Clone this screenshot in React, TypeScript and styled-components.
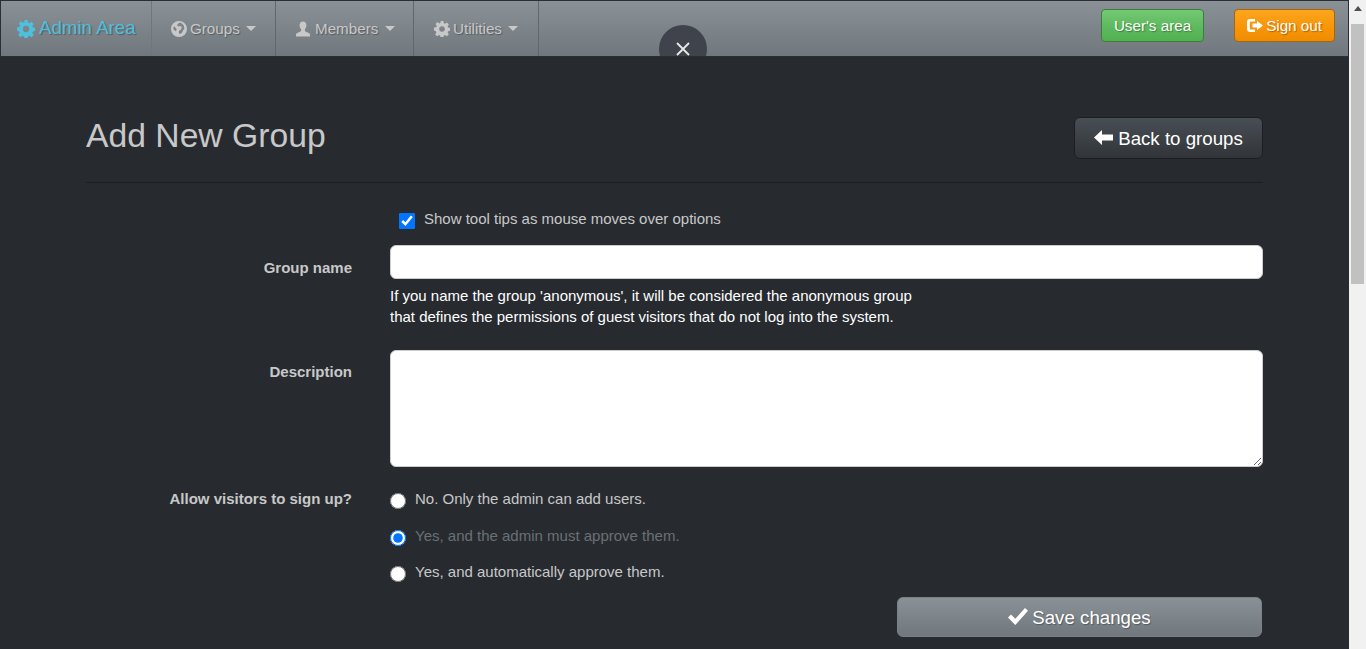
import React from 'react'
import styled, { createGlobalStyle } from 'styled-components'

const GlobalStyle = createGlobalStyle`
  html, body {
    margin: 0;
    height: 100%;
    overflow: hidden;
    background: #272b30;
  }
  * {
    box-sizing: border-box;
  }
  body {
    font-family: "Liberation Sans", Arial, sans-serif;
    font-size: 15px;
    line-height: 1.43;
    color: #c8c8c8;
  }
`

const Viewport = styled.div`
  display: flex;
  height: 100vh;
  overflow: hidden;
`

const Page = styled.div`
  flex: 1;
  min-width: 0;
  overflow: hidden;
`

const Navbar = styled.nav`
  display: flex;
  align-items: stretch;
  justify-content: space-between;
  height: 57px;
  background: linear-gradient(#8a9196, #7a8288 60%, #70787d);
  border: 1px solid #2b2e32;
  position: relative;
  overflow: hidden;
`

const NavLeft = styled.div`
  display: flex;
  align-items: stretch;
`

const NavRight = styled.div`
  display: flex;
  align-items: flex-start;
  gap: 30px;
  padding: 8px 13px 0 0;
`

const Brand = styled.a`
  display: flex;
  align-items: center;
  gap: 4px;
  width: 151px;
  padding-left: 16px;
  font-size: 18.7px;
  color: #4ebfdc;
  text-shadow: 1px 1px 1px rgba(0, 0, 0, 0.3);
  border-right: 1px solid #6f777c;
`

const NavItem = styled.a<{ $w: number; $pad?: number; $gap?: number }>`
  display: flex;
  align-items: center;
  gap: ${p => p.$gap ?? 3}px;
  width: ${p => p.$w}px;
  padding-left: ${p => p.$pad ?? 19}px;
  font-size: 15.2px;
  color: #c8c8c8;
  text-shadow: 1px 1px 1px rgba(0, 0, 0, 0.3);
  border-right: 1px solid #60686d;
`

const Caret = styled.span`
  width: 0;
  height: 0;
  margin-left: 3px;
  border-top: 5px solid #c8c8c8;
  border-left: 5px solid transparent;
  border-right: 5px solid transparent;
`

const NavButton = styled.a<{ $kind: 'success' | 'warning' }>`
  display: flex;
  align-items: center;
  justify-content: center;
  gap: 3px;
  height: 33px;
  width: ${p => (p.$kind === 'success' ? 103 : 101)}px;
  font-size: 15.2px;
  color: #fff;
  text-shadow: 1px 1px 1px rgba(0, 0, 0, 0.3);
  border-radius: 4px;
  border: 1px solid ${p => (p.$kind === 'success' ? '#3c7f3c' : '#a8650c')};
  background: ${p =>
    p.$kind === 'success'
      ? 'linear-gradient(#73c973, #5cb85c 60%, #52b052)'
      : 'linear-gradient(#fba61f, #f89406 60%, #ee8c02)'};
`

const CloseTab = styled.button`
  position: absolute;
  top: 24px;
  left: 658px;
  width: 48px;
  height: 48px;
  padding: 0;
  display: flex;
  align-items: center;
  justify-content: center;
  border: none;
  border-radius: 50%;
  background: #3f444c;
  color: #e8e8e8;
`

const Container = styled.main`
  padding: 0 86px;
`

const Header = styled.header`
  display: flex;
  align-items: flex-start;
  justify-content: space-between;
  height: 126px;
  padding-top: 60px;
  border-bottom: 1px solid #1c1e22;
`

const Title = styled.h1`
  margin: 0;
  font-size: 33.7px;
  font-weight: 400;
  line-height: 36px;
  color: #c8c8c8;
`

const BackButton = styled.a`
  display: flex;
  align-items: center;
  justify-content: center;
  gap: 5px;
  width: 189px;
  height: 42px;
  padding-top: 2px;
  font-size: 18.7px;
  color: #fff;
  border: 1px solid #1c1e22;
  border-radius: 6px;
  background: linear-gradient(#484e55, #3a3f44 60%, #313539);

  svg {
    margin-top: -3px;
  }
`

const Form = styled.form`
  display: grid;
  grid-template-columns: 266px 1fr;
  column-gap: 38px;
  align-items: start;
`

const FieldLabel = styled.label<{ $top: number }>`
  padding-top: ${p => p.$top}px;
  text-align: right;
  font-weight: 700;
  font-size: 15px;
  color: #c8c8c8;
`

const Cell = styled.div`
  min-width: 0;
`

const TipRow = styled.label`
  display: flex;
  align-items: flex-start;
  gap: 9px;
  padding: 25px 0 16px 9px;
  line-height: 21px;
  color: #c8c8c8;
`

const TipBox = styled.input`
  width: 16px;
  height: 16px;
  margin: 5px 0 0 0;
  accent-color: #0075ff;
`

const TextInput = styled.input`
  display: block;
  width: 100%;
  height: 34px;
  border: 1px solid #ccc;
  border-radius: 6px;
  background: #fff;
`

const Help = styled.p`
  margin: 6px 0 23px;
  font-size: 15px;
  line-height: 21px;
  color: #fff;
`

const TextArea = styled.textarea`
  display: block;
  width: 100%;
  height: 117px;
  margin: 0;
  border: 1px solid #ccc;
  border-radius: 6px;
  background: #fff;
`

const RadioGroup = styled.div`
  padding-top: 21px;
  margin-bottom: -1px;
`

const RadioRow = styled.label<{ $muted?: boolean }>`
  display: flex;
  align-items: flex-start;
  gap: 9px;
  height: 36.5px;
  line-height: 21px;
  color: ${p => (p.$muted ? '#6a7076' : '#c8c8c8')};
`

const Radio = styled.input`
  width: 16px;
  height: 16px;
  margin: 5px 0 0 0;
  accent-color: #0075ff;
`

const SaveRow = styled.div`
  display: flex;
  justify-content: flex-end;
  padding-right: 1px;
`

const SaveButton = styled.button`
  display: flex;
  align-items: center;
  justify-content: center;
  gap: 4px;
  width: 365px;
  height: 40px;
  padding: 2px 0 0;
  font-family: inherit;
  font-size: 18.7px;
  color: #fff;
  text-shadow: 1px 1px 1px rgba(0, 0, 0, 0.3);
  border: 1px solid #7a8288;
  border-radius: 6px;
  background: linear-gradient(#8a9196, #7a8288 60%, #70787d);

  svg {
    margin-top: -3px;
  }
`

const ScrollBar = styled.div`
  flex: none;
  width: 17px;
  display: flex;
  flex-direction: column;
  align-items: center;
  background: #f1f1f1;
`

const ScrollArrow = styled.div`
  width: 0;
  height: 0;
  margin-top: 6px;
  border-bottom: 5px solid #505050;
  border-left: 4px solid transparent;
  border-right: 4px solid transparent;
`

const ScrollThumb = styled.div`
  width: 13px;
  height: 260px;
  margin-top: 13px;
  background: #c1c1c1;
`

const Cog = ({ size }: { size: number }) => (
  <svg width={size} height={size} viewBox="0 0 16 16" fill="currentColor" aria-hidden="true">
    <path
      fillRule="evenodd"
      d="M6.6 0h2.8l.4 2.2 1.3.6 1.8-1.300 2 2-1.300 1.800.6 1.300 2.200.400v2.800l-2.200.400-.6 1.300 1.300 1.800-2 2-1.800-1.300-1.300.6-.4 2.200H6.600l-.4-2.200-1.300-.6-1.800 1.300-2-2 1.300-1.800-.6-1.300L0 9.400V6.600l2.200-.4.6-1.300-1.300-1.800 2-2 1.800 1.300 1.300-.6zM8 5.200a2.800 2.800 0 1 0 0 5.600 2.800 2.800 0 0 0 0-5.600z"
    />
  </svg>
)

const Globe = () => (
  <svg width="16" height="16" viewBox="0 0 16 16" fill="currentColor" aria-hidden="true">
    <path
      fillRule="evenodd"
      d="M8 0a8 8 0 1 1 0 16A8 8 0 0 1 8 0zm1 1.600L7.200 2.400 6 4.200l1.400 1.200L9.800 5l1 1.600-1 2.200-1.600.6-.4 2 1 1.800 2.400-1.600.8-2.400 1.400-1.200-.6-3.400-2.200-2.400zM3 5l-.8 3 2.400 2.200 1.200-1.600L4.400 6.400z"
    />
  </svg>
)

const UserIcon = () => (
  <svg width="16" height="16" viewBox="0 0 16 16" fill="currentColor" aria-hidden="true">
    <path d="M8 .5c2.200 0 3.400 1.500 3.400 3.700 0 1.700-.7 3.200-1.500 4v1.500c0 .7 1.200 1 2.300 1.500 1.300.6 2.800 1.200 2.800 2.300v2H1v-2c0-1.100 1.500-1.700 2.800-2.300 1.100-.5 2.300-.8 2.300-1.500V8.200c-.8-.8-1.500-2.300-1.500-4C4.600 2 5.800.5 8 .5z" />
  </svg>
)

const SignOutIcon = () => (
  <svg width="16" height="15" viewBox="0 0 16 15" fill="currentColor" aria-hidden="true">
    <path d="M3 1h5v2.500H3.800a1 1 0 0 0-1 1v6a1 1 0 0 0 1 1H8V14H3a3 3 0 0 1-3-3V4a3 3 0 0 1 3-3z" />
    <path d="M10 3 16 7.500 10 12V9.400H5.500V5.600H10z" />
  </svg>
)

const ArrowLeft = () => (
  <svg width="19" height="15" viewBox="0 0 19 15" fill="currentColor" aria-hidden="true">
    <path d="M8 0V4.500H19v6H8V15L0 7.500z" />
  </svg>
)

const Check = () => (
  <svg width="20" height="17" viewBox="0 0 20 17" fill="currentColor" aria-hidden="true">
    <path d="M0 9.500 3 6.500 7.300 10.800 17 0l3 2.800L7.300 17z" />
  </svg>
)

const Cross = () => (
  <svg width="14" height="14" viewBox="0 0 14 14" stroke="currentColor" strokeWidth="1.800" aria-hidden="true">
    <path d="M1 1l12 12M13 1 1 13" />
  </svg>
)

export default function App() {
  return (
    <Viewport>
      <GlobalStyle />
      <Page>
        <Navbar>
          <NavLeft>
            <Brand>
              <Cog size={18} />
              Admin Area
            </Brand>
            <NavItem $w={124}>
              <Globe />
              Groups
              <Caret />
            </NavItem>
            <NavItem $w={138} $gap={4}>
              <UserIcon />
              Members
              <Caret />
            </NavItem>
            <NavItem $w={125} $pad={20}>
              <Cog size={16} />
              Utilities
              <Caret />
            </NavItem>
          </NavLeft>
          <CloseTab aria-label="Close">
            <Cross />
          </CloseTab>
          <NavRight>
            <NavButton $kind="success">User's area</NavButton>
            <NavButton $kind="warning">
              <SignOutIcon />
              Sign out
            </NavButton>
          </NavRight>
        </Navbar>
        <Container>
          <Header>
            <Title>Add New Group</Title>
            <BackButton>
              <ArrowLeft />
              Back to groups
            </BackButton>
          </Header>
          <Form>
            <span />
            <TipRow>
              <TipBox type="checkbox" defaultChecked />
              Show tool tips as mouse moves over options
            </TipRow>
            <FieldLabel $top={12}>Group name</FieldLabel>
            <Cell>
              <TextInput type="text" />
              <Help>
                If you name the group 'anonymous', it will be considered the anonymous group
                <br />
                that defines the permissions of guest visitors that do not log into the system.
              </Help>
            </Cell>
            <FieldLabel $top={11}>Description</FieldLabel>
            <Cell>
              <TextArea />
            </Cell>
            <FieldLabel $top={21}>Allow visitors to sign up?</FieldLabel>
            <RadioGroup>
              <RadioRow>
                <Radio type="radio" name="visitors" />
                No. Only the admin can add users.
              </RadioRow>
              <RadioRow $muted>
                <Radio type="radio" name="visitors" defaultChecked />
                Yes, and the admin must approve them.
              </RadioRow>
              <RadioRow>
                <Radio type="radio" name="visitors" />
                Yes, and automatically approve them.
              </RadioRow>
            </RadioGroup>
            <span />
            <SaveRow>
              <SaveButton type="button">
                <Check />
                Save changes
              </SaveButton>
            </SaveRow>
          </Form>
        </Container>
      </Page>
      <ScrollBar>
        <ScrollArrow />
        <ScrollThumb />
      </ScrollBar>
    </Viewport>
  )
}
